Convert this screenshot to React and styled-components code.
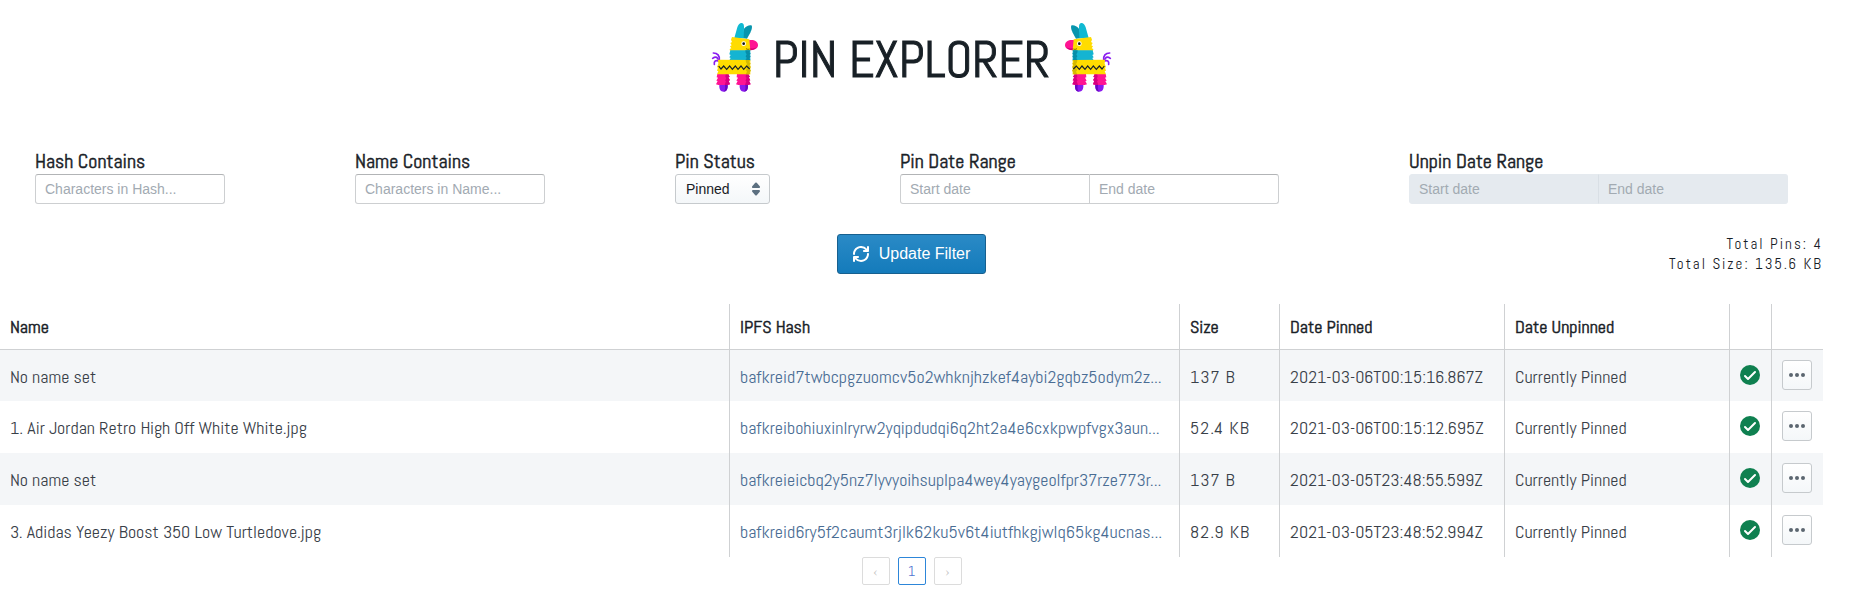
import React from "react";
import styled, { createGlobalStyle, css } from "styled-components";

const narrow = `"Abel", "Liberation Sans Narrow", "Roboto Condensed", "Liberation Sans", sans-serif`;
const sans = `"Liberation Sans", Arial, sans-serif`;
const rule = "1px solid #cfd1d3";

const GlobalStyle = createGlobalStyle`
  *, *::before, *::after { box-sizing: border-box; }
  body {
    margin: 0;
    background: #fff;
    color: #182026;
    font-family: ${narrow};
    font-size: 18px;
    line-height: 20px;
  }
`;

const Page = styled.main`
  padding-right: 27px;
`;

const Banner = styled.header`
  display: flex;
  align-items: center;
  justify-content: center;
  gap: 13px;
  padding-top: 19px;
`;

const Title = styled.h1`
  margin: 0;
  padding-top: 5px;
  font-size: 50px;
  font-weight: 400;
  line-height: 72px;
  -webkit-text-stroke: 1px currentColor;
`;

const PinataSvg = styled.svg`
  width: 50px;
  height: 71px;
`;

const Filters = styled.form`
  display: flex;
  flex-wrap: wrap;
  justify-content: space-between;
  gap: 16px;
  padding: 54px 35px 0;
`;

const Field = styled.div`
  display: flex;
  flex-direction: column;
  align-items: flex-start;
`;

const labelText = css`
  padding: 0 0 2px;
  font-size: 20px;
  font-weight: 400;
  line-height: 22px;
  -webkit-text-stroke: 0.5px currentColor;
`;

const Label = styled.label`
  ${labelText}
`;

const Group = styled.fieldset`
  margin: 0;
  padding: 0;
  border: 0;
  min-width: 0;
`;

const Legend = styled.legend`
  ${labelText}
`;

const TextInput = styled.input`
  width: 190px;
  height: 30px;
  padding: 0 9px;
  border: 1px solid #cdcfd1;
  border-top-color: #b2b4b6;
  border-radius: 3px;
  background: #fff;
  color: #182026;
  font-family: ${sans};
  font-size: 14px;

  &::placeholder { color: #a2aab2; opacity: 1; }
  &:disabled { background: #e5eaef; border-color: #e5eaef; }
`;

const Range = styled.div`
  display: flex;

  ${TextInput}:first-child { border-radius: 3px 0 0 3px; }
  ${TextInput}:last-child {
    border-radius: 0 3px 3px 0;
    border-left-color: ${(p) => (p.$muted ? "#d9dfe5" : "#cdcfd1")};
    margin-left: -1px;
  }
`;

const SelectBox = styled.div`
  display: grid;
  align-items: center;
  > * { grid-area: 1 / 1; }
  svg { justify-self: end; margin-right: 8px; pointer-events: none; }
`;

const Select = styled.select`
  appearance: none;
  width: 95px;
  height: 30px;
  padding: 0 24px 0 10px;
  border: 1px solid #c6cacd;
  border-radius: 3px;
  background: linear-gradient(#fff, #f4f7f9);
  color: #182026;
  font-family: ${sans};
  font-size: 14px;
`;

const Actions = styled.div`
  display: grid;
  grid-template-columns: 1fr auto 1fr;
  align-items: center;
  padding-top: 30px;
`;

const UpdateButton = styled.button`
  grid-column: 2;
  display: flex;
  align-items: center;
  gap: 10px;
  height: 40px;
  padding: 0 15px;
  border: 1px solid #17608f;
  border-radius: 3px;
  background: linear-gradient(#2a8ac6, #147bbb);
  color: #fff;
  font-family: ${sans};
  font-size: 16px;
`;

const Totals = styled.div`
  text-align: right;
  font-size: 15px;
  letter-spacing: 2px;
`;

const Table = styled.table`
  width: 100%;
  margin-top: 30px;
  table-layout: fixed;
  border-collapse: separate;
  border-spacing: 0;
`;

const Col = styled.col`
  width: ${(p) => p.$width};
`;

const HeadCell = styled.th`
  padding: 0 10px;
  height: 45px;
  text-align: left;
  white-space: nowrap;
  font-weight: 400;
  -webkit-text-stroke: 0.5px currentColor;
  & + & { border-left: ${rule}; }
`;

const Cell = styled.td`
  padding: ${(p) => (p.$icon ? "0 10px 2px" : "2px 10px 0")};
  height: 52px;
  white-space: nowrap;
  overflow: hidden;
  color: #394048;
  letter-spacing: ${(p) => (p.$spaced ? "1px" : "normal")};
  & + & { border-left: ${rule}; }
  svg { display: block; }
`;

const Row = styled.tr`
  &:nth-child(odd) { background: #f4f6f8; }
  &:first-child ${Cell} { border-top: ${rule}; }
`;

const HashLink = styled.a`
  display: block;
  color: #4a6d94;
  text-decoration: none;
`;

const MoreButton = styled.button`
  display: flex;
  align-items: center;
  justify-content: center;
  width: 30px;
  height: 30px;
  padding: 0;
  border: 1px solid #c6cacd;
  border-radius: 3px;
  background: linear-gradient(#fff, #f4f7f9);
`;

const Pagination = styled.nav`
  display: flex;
  justify-content: center;
  gap: 8px;
`;

const PageButton = styled.button`
  width: 28px;
  height: 28px;
  padding: 0;
  border: 1px solid ${(p) => (p.$active ? "#2d86d9" : "#dcdcdc")};
  border-radius: 2px;
  background: #fff;
  color: ${(p) => (p.$active ? "#4f74d0" : "#c2c2c2")};
  font-family: ${narrow};
  font-size: 14px;
`;

function Pinata({ flip }) {
  return (
    <PinataSvg viewBox="30 36 150 213" aria-hidden="true">
      <g transform={flip ? "translate(210 0) scale(-1 1)" : undefined}>
        <g fill="none" stroke="#8a1cf0" strokeWidth="5" strokeLinecap="round">
          <path d="M58 152C60 136 52 129 40 129" />
          <path d="M56 152C54 142 48 138 38 145" />
          <path d="M55 153C48 150 41 153 43 163" />
        </g>
        <path fill="#0795ad" d="M124 84l8-28c6-8 16-12 22-10 4 4 1 14-3 22l-10 18z" />
        <path fill="#10b9d2" d="M103 84l9-32c2-8 8-14 14-13 6 2 6 8 6 14l-1 32z" />
        <path fill="#ff1493" d="M146 91c14-4 27 3 28 13 1 11-11 17-28 16z" />
        <path fill="#d60077" d="M146 113c8 3 18 3 24-1-5 7-14 10-24 8z" />
        <path fill="#ffdc00" d="M96 81l52 7 3 34H90l-1-5 5-2-4-6 5-3-4-7 5-3-3-7z" />
        <circle cx="131" cy="101" r="7" fill="#fff" />
        <circle cx="131" cy="101" r="4" fill="#111" />
        <path d="M138 116q6 4 11 1" fill="none" stroke="#4b3a00" strokeWidth="2" />
        <path fill="#14b4d2" d="M91 121h60v30H88l4-7-4-2 4-7-4-2z" />
        <path fill="#078da8" d="M136 121h15l-3 6 4 3-4 6 4 3-4 6 4 6h-16l4-7-3-5 3-6-3-5z" />
        <path fill="#ff1493" d="M52 192h33l4 9-4 1 5 9-4 1 4 11-8 2H55l-7-2 5-10-4-1 5-9-4-1zM111 192h34l5 9-4 1 5 9-4 1 5 11-9 2h-28l-7-2 5-10-4-1 5-9-4-1z" />
        <path fill="#d60080" d="M77 192h8l4 9-4 1 5 9-4 1 4 11-8 2h-8l4-12-3-1 4-9-3-1zM138 192h7l5 9-4 1 5 9-4 1 5 11-9 2h-8l4-12-3-1 4-9-3-1z" />
        <path fill="#ffdc00" d="M54 149l97 1v43H51l4-9-4-2 3-9-3-2 4-10z" />
        <path fill="#d5b900" d="M137 150h13l-3 7 5 3-4 7 5 3-4 8 4 3-4 7 2 5h-14l4-8-3-4 3-8-3-4 3-7-3-5z" />
        <path d="M56 168l7 9 8-9 9 10 9-10 8 10 9-10 8 10 9-10 8 10 9-10 9 9" fill="none" stroke="#17202a" strokeWidth="3.6" />
        <path fill="#8a18ee" d="M58 225h25c1 13-4 20-12 20-9 0-14-7-13-20zM119 225h25c1 13-4 20-12 20-9 0-14-7-13-20z" />
        <path fill="#6809c0" d="M75 225h8c1 13-4 20-12 20 5-4 5-12 4-20zM136 225h8c1 13-4 20-12 20 5-4 5-12 4-20z" />
      </g>
    </PinataSvg>
  );
}

const RefreshIcon = () => (
  <svg width="16" height="16" viewBox="0 0 16 16" fill="currentColor" aria-hidden="true">
    <path d="M14.99 6.99c-.55 0-1 .45-1 1 0 3.31-2.69 6-6 6-1.77 0-3.36-.78-4.46-2h1.46c.55 0 1-.45 1-1s-.45-1-1-1h-4c-.55 0-1 .45-1 1v4c0 .55.45 1 1 1s1-.45 1-1v-1.74a7.95 7.95 0 006 2.74c4.42 0 8-3.58 8-8 0-.55-.45-1-1-1zm0-7c-.55 0-1 .45-1 1v1.74a7.95 7.95 0 00-6-2.74c-4.42 0-8 3.58-8 8 0 .55.45 1 1 1s1-.45 1-1c0-3.31 2.69-6 6-6 1.77 0 3.36.78 4.46 2h-1.46c-.55 0-1 .45-1 1s.45 1 1 1h4c.55 0 1-.45 1-1v-4c0-.55-.45-1-1-1z" />
  </svg>
);

const CaretIcon = () => (
  <svg width="12" height="16" viewBox="2 0 12 16" fill="#5c7080" aria-hidden="true">
    <path d="M5 7h6a1 1 0 00.75-1.66l-3-3.5a1 1 0 00-1.5 0l-3 3.5A1 1 0 005 7zM11 9H5a1 1 0 00-.75 1.66l3 3.5a1 1 0 001.5 0l3-3.5A1 1 0 0011 9z" />
  </svg>
);

const PinnedIcon = () => (
  <svg width="20" height="20" viewBox="0 0 20 20" role="img" aria-label="Pinned">
    <circle cx="10" cy="10" r="10" fill="#0f8050" />
    <path d="M5 11l3 3 7-7" fill="none" stroke="#fff" strokeWidth="2" strokeLinecap="round" strokeLinejoin="round" />
  </svg>
);

const MoreIcon = () => (
  <svg width="16" height="16" viewBox="0 0 16 16" fill="#5c6670" aria-hidden="true">
    <circle cx="2" cy="8" r="2" />
    <circle cx="8" cy="8" r="2" />
    <circle cx="14" cy="8" r="2" />
  </svg>
);

const columns = [
  { title: "Name", width: "auto" },
  { title: "IPFS Hash", width: "450px" },
  { title: "Size", width: "100px" },
  { title: "Date Pinned", width: "225px" },
  { title: "Date Unpinned", width: "225px" },
  { title: "", width: "42px" },
  { title: "", width: "52px" },
];

const pins = [
  { name: "No name set", hash: "bafkreid7twbcpgzuomcv5o2whknjhzkef4aybi2gqbz5odym2z...", size: "137 B", pinned: "2021-03-06T00:15:16.867Z" },
  { name: "1. Air Jordan Retro High Off White White.jpg", hash: "bafkreibohiuxinlryrw2yqipdudqi6q2ht2a4e6cxkpwpfvgx3aun...", size: "52.4 KB", pinned: "2021-03-06T00:15:12.695Z" },
  { name: "No name set", hash: "bafkreieicbq2y5nz7lyvyoihsuplpa4wey4yaygeolfpr37rze773r...", size: "137 B", pinned: "2021-03-05T23:48:55.599Z" },
  { name: "3. Adidas Yeezy Boost 350 Low Turtledove.jpg", hash: "bafkreid6ry5f2caumt3rjlk62ku5v6t4iutfhkgjwlq65kg4ucnas...", size: "82.9 KB", pinned: "2021-03-05T23:48:52.994Z" },
];

function DateRange({ title, disabled }) {
  return (
    <Group disabled={disabled}>
      <Legend>{title}</Legend>
      <Range $muted={disabled}>
        <TextInput placeholder="Start date" aria-label={`${title} start`} />
        <TextInput placeholder="End date" aria-label={`${title} end`} />
      </Range>
    </Group>
  );
}

export default function App() {
  return (
    <Page>
      <GlobalStyle />
      <Banner>
        <Pinata />
        <Title>PIN EXPLORER</Title>
        <Pinata flip />
      </Banner>

      <Filters id="filters" onSubmit={(e) => e.preventDefault()}>
        <Field>
          <Label htmlFor="hash">Hash Contains</Label>
          <TextInput id="hash" placeholder="Characters in Hash..." />
        </Field>
        <Field>
          <Label htmlFor="name">Name Contains</Label>
          <TextInput id="name" placeholder="Characters in Name..." />
        </Field>
        <Field>
          <Label htmlFor="status">Pin Status</Label>
          <SelectBox>
            <Select id="status" defaultValue="Pinned">
              <option>Pinned</option>
              <option>Unpinned</option>
              <option>All</option>
            </Select>
            <CaretIcon />
          </SelectBox>
        </Field>
        <DateRange title="Pin Date Range" />
        <DateRange title="Unpin Date Range" disabled />
      </Filters>

      <Actions>
        <UpdateButton type="submit" form="filters">
          <RefreshIcon />
          Update Filter
        </UpdateButton>
        <Totals>
          <div>Total Pins: 4</div>
          <div>Total Size: 135.6 KB</div>
        </Totals>
      </Actions>

      <Table>
        <colgroup>
          {columns.map((c, i) => <Col key={i} $width={c.width} />)}
        </colgroup>
        <thead>
          <tr>
            {columns.map((c, i) => <HeadCell key={i} scope="col">{c.title}</HeadCell>)}
          </tr>
        </thead>
        <tbody>
          {pins.map((pin) => (
            <Row key={pin.hash}>
              <Cell>{pin.name}</Cell>
              <Cell><HashLink href="#">{pin.hash}</HashLink></Cell>
              <Cell $spaced>{pin.size}</Cell>
              <Cell>{pin.pinned}</Cell>
              <Cell>Currently Pinned</Cell>
              <Cell $icon><PinnedIcon /></Cell>
              <Cell $icon>
                <MoreButton type="button" aria-label="More actions"><MoreIcon /></MoreButton>
              </Cell>
            </Row>
          ))}
        </tbody>
      </Table>

      <Pagination aria-label="Pages">
        <PageButton type="button" disabled aria-label="Previous page">‹</PageButton>
        <PageButton type="button" $active aria-current="page">1</PageButton>
        <PageButton type="button" disabled aria-label="Next page">›</PageButton>
      </Pagination>
    </Page>
  );
}
